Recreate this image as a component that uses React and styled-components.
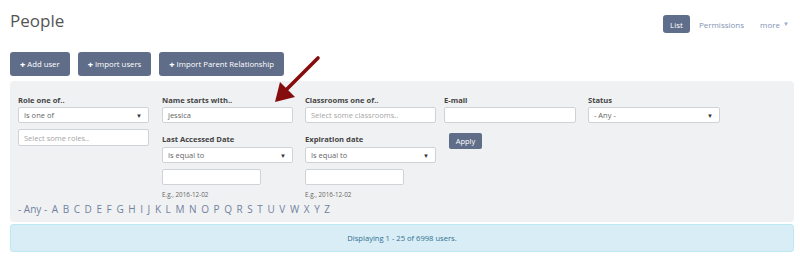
import React from "react";
import styled, { createGlobalStyle } from "styled-components";

const GlobalStyle = createGlobalStyle`
  html, body {
    margin: 0;
    padding: 0;
    background: #fff;
    font-family: "Open Sans", "Liberation Sans", sans-serif;
  }
`;

const Page = styled.div`
  width: 800px;
  height: 264px;
  padding: 0 6px 0 10px;
  box-sizing: border-box;
  position: relative;
  overflow: hidden;
`;

const Header = styled.div`
  display: flex;
  justify-content: space-between;
  align-items: flex-start;
  height: 52px;
`;

const Title = styled.h1`
  margin: 9px 0 0 0;
  font-size: 17px;
  font-weight: 400;
  line-height: 24px;
  color: #555;
`;

const Tabs = styled.div`
  display: flex;
  align-items: center;
  margin: 15px 5px 0 0;
`;

const Tab = styled.a`
  display: flex;
  align-items: center;
  height: 18px;
  padding: 0 ${(p) => (p.$active ? "7px" : "0")};
  margin-right: ${(p) => p.$gap || 0}px;
  border-radius: 3px;
  font-size: 8px;
  color: ${(p) => (p.$active ? "#fff" : "#8393b4")};
  background: ${(p) => (p.$active ? "#5f6e8a" : "transparent")};
`;

const Caret = styled.span`
  margin-left: 3px;
  font-size: 6px;
  color: #9aaacb;
`;

const ButtonRow = styled.div`
  display: flex;
  gap: 8px;
  margin-bottom: 5px;
`;

const ActionButton = styled.button`
  display: flex;
  align-items: center;
  height: 24px;
  padding: 0 10px;
  border: none;
  border-radius: 3px;
  background: #5f6d89;
  color: #fff;
  font-family: inherit;
  font-size: 7.75px;
`;

const Plus = styled.span`
  font-weight: 800;
  font-size: 9px;
  margin-right: 2px;
  line-height: 1;
`;

const Panel = styled.div`
  background: #f0f1f3;
  border-radius: 4px;
  padding: 13px 8px 6px;
  width: 784px;
  box-sizing: border-box;
`;

const FilterGrid = styled.div`
  display: grid;
  grid-template-columns: 144px 143px 139px 144px 1fr;
`;

const Column = styled.div`
  display: flex;
  flex-direction: column;
  align-items: flex-start;
`;

const Label = styled.label`
  font-size: 7.6px;
  font-weight: 700;
  color: #444;
  line-height: 12px;
  margin-top: ${(p) => p.$top || 0}px;
  margin-bottom: ${(p) => (p.$top ? 2 : 1)}px;
`;

const Field = styled.div`
  position: relative;
  display: flex;
  align-items: center;
  width: ${(p) => p.$w || 131}px;
  height: ${(p) => p.$h || 16}px;
  margin-top: ${(p) => p.$top || 0}px;
  box-sizing: border-box;
  padding: 0 5px;
  background: #fff;
  border: 1px solid #cfd3d8;
  border-radius: 2px;
  font-size: 7.5px;
  color: ${(p) => (p.$placeholder ? "#a6a6a6" : "#666")};
`;

const SelectCaret = styled.span`
  position: absolute;
  right: 6px;
  top: 4px;
  font-size: 6px;
  color: #333;
`;

const Hint = styled.div`
  font-size: 6.3px;
  color: #666;
  line-height: 10px;
  margin-top: 5px;
`;

const ApplyButton = styled.button`
  margin: 10px 0 0 5px;
  width: 33px;
  height: 16px;
  padding: 0;
  border: none;
  border-radius: 2px;
  background: #5f6d89;
  color: #fff;
  font-family: inherit;
  font-size: 7.5px;
`;

const Alphabet = styled.div`
  display: flex;
  gap: 4.6px;
  margin-top: 2px;
  line-height: 14px;
  font-size: 10px;
  color: #7081a0;
`;

const Letter = styled.a`
  color: inherit;
`;

const Alert = styled.div`
  margin-top: 2px;
  width: 784px;
  height: 28px;
  box-sizing: border-box;
  display: flex;
  align-items: center;
  justify-content: center;
  background: #d9edf7;
  border: 1px solid #bce8f1;
  border-radius: 3px;
  font-size: 7.6px;
  color: #31708f;
`;

const ArrowSvg = styled.svg`
  position: absolute;
  left: 268px;
  top: 52px;
`;

const letters = "ABCDEFGHIJKLMNOPQRSTUVWXYZ".split("");

function Select({ value, w, top }) {
  return (
    <Field $w={w} $top={top}>
      {value}
      <SelectCaret>▼</SelectCaret>
    </Field>
  );
}

export default function App() {
  return (
    <Page>
      <GlobalStyle />
      <Header>
        <Title>People</Title>
        <Tabs>
          <Tab $active $gap={9}>List</Tab>
          <Tab $gap={16}>Permissions</Tab>
          <Tab>more<Caret>▼</Caret></Tab>
        </Tabs>
      </Header>

      <ButtonRow>
        <ActionButton><Plus>+</Plus>Add user</ActionButton>
        <ActionButton><Plus>+</Plus>Import users</ActionButton>
        <ActionButton><Plus>+</Plus>Import Parent Relationship</ActionButton>
      </ButtonRow>

      <Panel>
        <FilterGrid>
          <Column>
            <Label>Role one of..</Label>
            <Select value="Is one of" />
            <Field $placeholder $top={6} $h={17}>Select some roles..</Field>
          </Column>
          <Column>
            <Label>Name starts with..</Label>
            <Field>jessica</Field>
            <Label $top={10}>Last Accessed Date</Label>
            <Select value="Is equal to" />
            <Field $w={99} $top={6} />
            <Hint>E.g., 2016-12-02</Hint>
          </Column>
          <Column>
            <Label>Classrooms one of..</Label>
            <Field $placeholder>Select some classrooms..</Field>
            <Label $top={10}>Expiration date</Label>
            <Select value="Is equal to" />
            <Field $w={99} $top={6} />
            <Hint>E.g., 2016-12-02</Hint>
          </Column>
          <Column>
            <Label>E-mail</Label>
            <Field $w={132} />
            <ApplyButton>Apply</ApplyButton>
          </Column>
          <Column>
            <Label>Status</Label>
            <Select value="- Any -" w={132} />
          </Column>
        </FilterGrid>
        <Alphabet>
          <Letter>- Any -</Letter>
          {letters.map((l) => (
            <Letter key={l}>{l}</Letter>
          ))}
        </Alphabet>
      </Panel>

      <Alert>Displaying 1 - 25 of 6998 users.</Alert>

      <ArrowSvg width="60" height="56" viewBox="0 0 60 56">
        <line x1="50" y1="6" x2="16" y2="40" stroke="#860d0d" strokeWidth="3.6" strokeLinecap="round" />
        <polygon points="7,50 12,30 27,45" fill="#860d0d" />
      </ArrowSvg>
    </Page>
  );
}
